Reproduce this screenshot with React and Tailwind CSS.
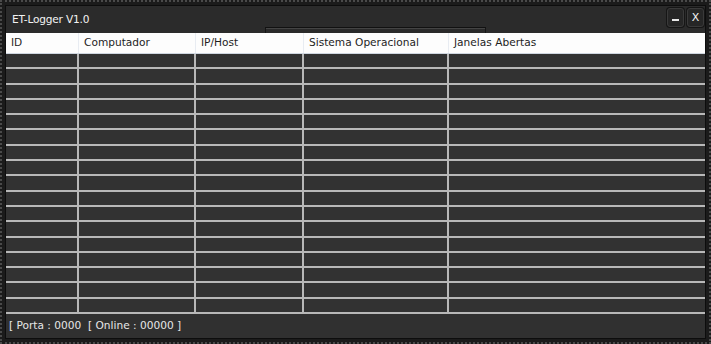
import React from "react";

const cols = "grid grid-cols-[73px_117px_108px_145px_1fr]";
const headers = ["ID", "Computador", "IP/Host", "Sistema Operacional", "Janelas Abertas"];

export default function App() {
  const rows = Array.from({ length: 17 });
  return (
    <div
      className="w-[711px] h-[344px] bg-[#1b1b1b] border-2 border-dotted border-[#4a4a4a] p-[3px] flex"
      style={{ fontFamily: '"DejaVu Sans", Verdana, sans-serif' }}
    >
      <div className="flex-1 flex flex-col border border-[#0d0d0d] bg-[#2c2c2c]">
        {/* title bar */}
        <div className="relative h-[27px] shrink-0 flex items-center pl-[6px] pr-[1px] bg-[#2b2b2b]">
          <span className="text-[10.6px] text-[#f2f2f2] tracking-[-0.2px]">ET-Logger V1.0</span>
          <div className="absolute left-[259px] bottom-0 w-[221px] h-[6px] border border-b-0 border-[#151515] border-t-[#111] bg-[#2a2a2a] shadow-[inset_0_1px_0_#444]" />
          <div className="ml-auto flex gap-[3px] self-start mt-[2px]">
            <div className="w-[17px] h-[19px] rounded-[3px] bg-[#262626] border border-[#3a3a3a] shadow-[0_0_0_1px_#161616] flex items-end justify-center pb-[5px]">
              <div className="w-[7px] h-[2px] bg-[#e8e8e8]" />
            </div>
            <div className="w-[17px] h-[19px] rounded-[3px] bg-[#262626] border border-[#3a3a3a] shadow-[0_0_0_1px_#161616] flex items-center justify-center text-[11px] text-[#f4f4f4] leading-none">
              X
            </div>
          </div>
        </div>
        {/* header */}
        <div className={`${cols} h-[21px] shrink-0 bg-[#fdfdfd] border-b border-[#cfd6e0]`}>
          {headers.map((h, i) => (
            <div
              key={h}
              className={`flex items-center pl-[5px] text-[10.6px] text-[#1e1e1e] ${i < 4 ? "border-r border-[#e8ecf2]" : ""}`}
            >
              {h}
            </div>
          ))}
        </div>
        {/* body */}
        <div className="h-[260px] shrink-0 flex flex-col bg-[#323232]">
          {rows.map((_, r) => (
            <div key={r} className={`${cols} flex-1 border-b-2 border-[#b8b8b8]`}>
              {headers.map((h, i) => (
                <div key={h} className={i < 4 ? "border-r-2 border-[#b8b8b8]" : ""} />
              ))}
            </div>
          ))}
        </div>
        {/* footer */}
        <div className="flex-1 flex items-center pl-[3px] bg-[#303030]">
          <span className="text-[10.6px] text-[#e6e6e6] whitespace-pre">[ Porta : 0000  [ Online : 00000 ]</span>
        </div>
      </div>
    </div>
  );
}
